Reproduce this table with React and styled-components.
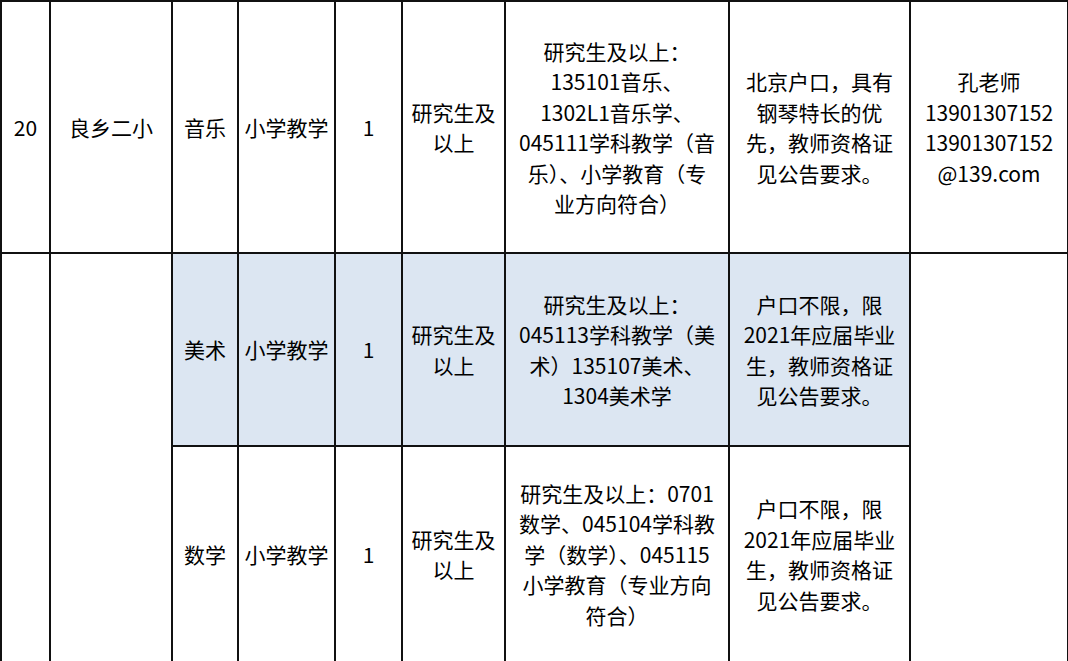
import React from "react";
import styled, { createGlobalStyle } from "styled-components";

const GlobalStyle = createGlobalStyle`
  html, body {
    margin: 0;
    padding: 0;
    background: #ffffff;
    overflow: hidden;
  }
  body {
    font-family: "Noto Sans CJK SC", "Noto Sans", sans-serif;
    color: #000;
  }
`;

const Table = styled.table`
  border-collapse: collapse;
  table-layout: fixed;
  width: 1067px;
  margin-left: 0;
`;

const Row = styled.tr`
  height: ${(p) => p.h}px;
`;

const Cell = styled.td`
  border: 2px solid #111;
  padding: 0 2px;
  text-align: center;
  vertical-align: middle;
  font-size: 21px;
  line-height: 30.5px;
  background: ${(p) => (p.shade ? "#dce6f2" : "#ffffff")};
  white-space: nowrap;
`;

const widths = [49, 122, 66, 97, 67, 103, 224, 181, 158];

const rows = [
  {
    subject: "音乐",
    h: 252,
    shade: false,
    major: (
      <>
        研究生及以上：
        <br />
        135101音乐、
        <br />
        1302L1音乐学、
        <br />
        045111学科教学（音
        <br />
        乐）、小学教育（专
        <br />
        业方向符合）
      </>
    ),
    note: (
      <>
        北京户口，具有
        <br />
        钢琴特长的优
        <br />
        先，教师资格证
        <br />
        见公告要求。
      </>
    ),
  },
  {
    subject: "美术",
    h: 193,
    shade: true,
    major: (
      <>
        研究生及以上：
        <br />
        045113学科教学（美
        <br />
        术）135107美术、
        <br />
        1304美术学
      </>
    ),
    note: (
      <>
        户口不限，限
        <br />
        2021年应届毕业
        <br />
        生，教师资格证
        <br />
        见公告要求。
      </>
    ),
  },
  {
    subject: "数学",
    h: 216,
    shade: false,
    major: (
      <>
        研究生及以上：0701
        <br />
        数学、045104学科教
        <br />
        学（数学）、045115
        <br />
        小学教育（专业方向
        <br />
        符合）
      </>
    ),
    note: (
      <>
        户口不限，限
        <br />
        2021年应届毕业
        <br />
        生，教师资格证
        <br />
        见公告要求。
      </>
    ),
  },
];

const App = () => {
  return (
    <>
      <GlobalStyle />
      <Table>
        <colgroup>
          {widths.map((w, i) => (
            <col key={i} style={{ width: w }} />
          ))}
        </colgroup>
        <tbody>
          {rows.map((r, i) => (
            <Row key={r.subject} h={r.h}>
              {i === 0 && (
                <>
                  <Cell>20</Cell>
                  <Cell>良乡二小</Cell>
                </>
              )}
              {i === 1 && (
                <>
                  <Cell rowSpan={2}></Cell>
                  <Cell rowSpan={2}></Cell>
                </>
              )}
              <Cell shade={r.shade}>{r.subject}</Cell>
              <Cell shade={r.shade}>小学教学</Cell>
              <Cell shade={r.shade}>1</Cell>
              <Cell shade={r.shade}>
                研究生及
                <br />
                以上
              </Cell>
              <Cell shade={r.shade}>{r.major}</Cell>
              <Cell shade={r.shade}>{r.note}</Cell>
              {i === 0 && (
                <Cell>
                  孔老师
                  <br />
                  13901307152
                  <br />
                  13901307152
                  <br />
                  @139.com
                </Cell>
              )}
              {i === 1 && <Cell rowSpan={2}></Cell>}
            </Row>
          ))}
        </tbody>
      </Table>
    </>
  );
};

export default App;
